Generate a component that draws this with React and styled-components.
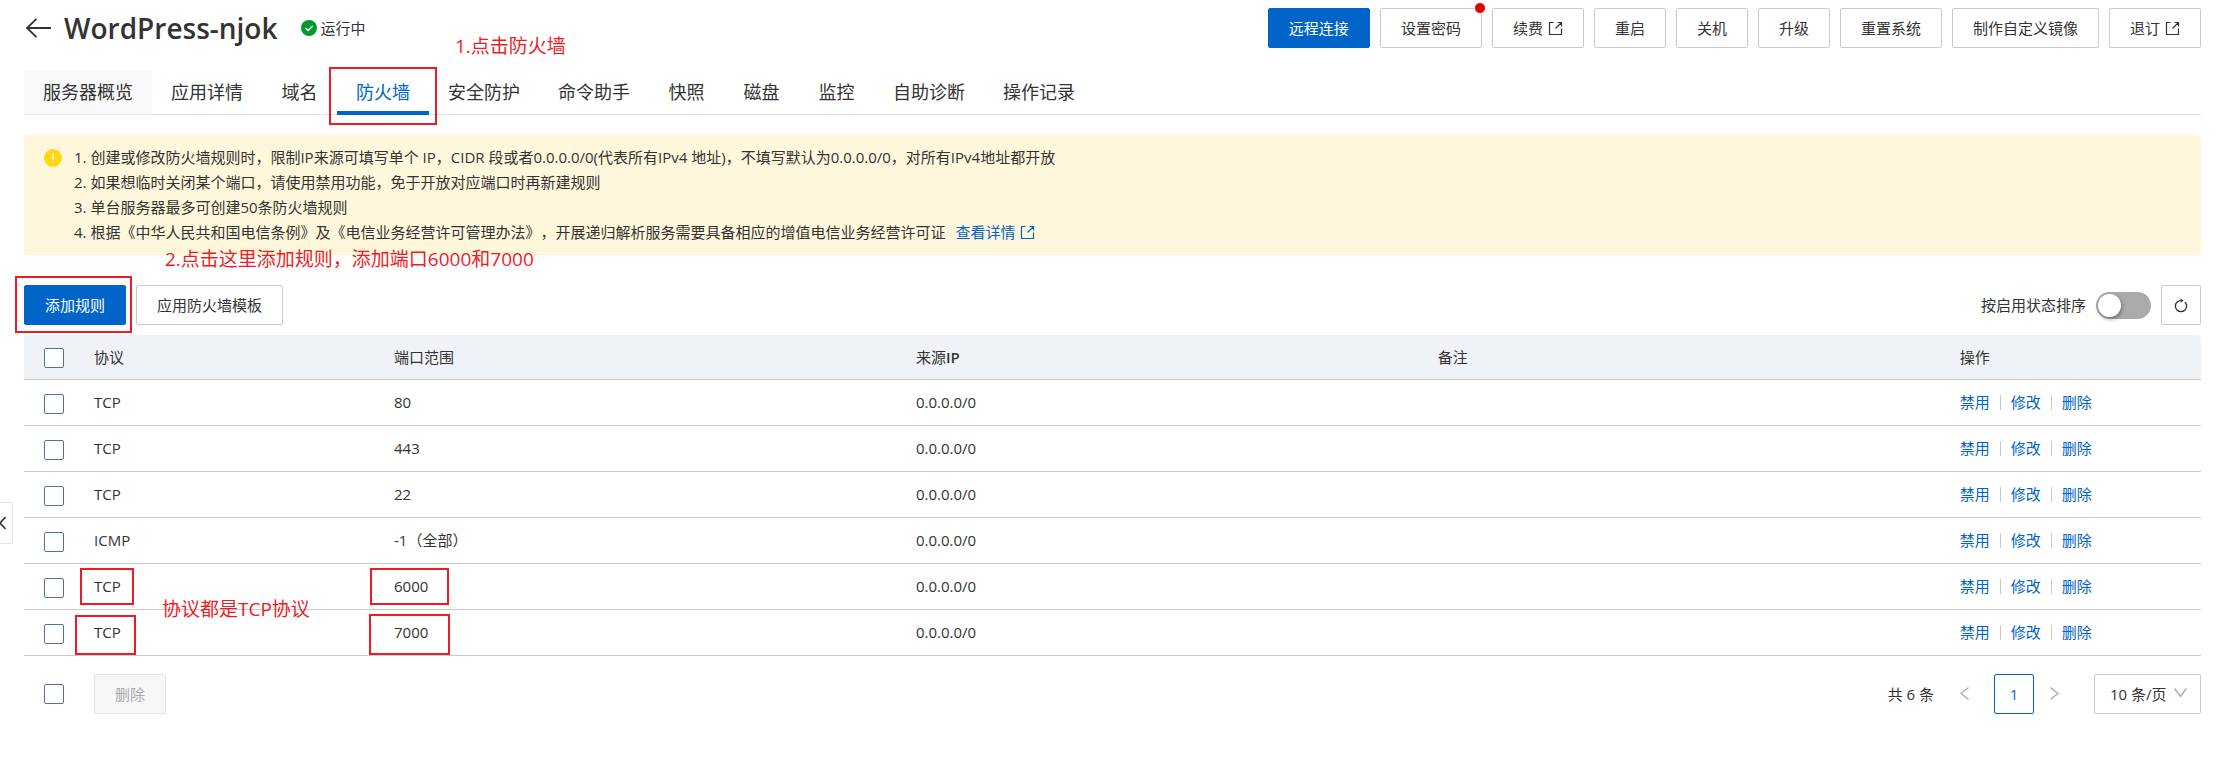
import React, { useState } from "react";
import styled, { createGlobalStyle, css } from "styled-components";

const blue = "#0064c8";
const text = "#333";
const line = "#c8cacc";
const red = "#ed1c24";

const GlobalStyle = createGlobalStyle`
  * {
    box-sizing: border-box;
  }
  body {
    margin: 0;
    background: #fff;
    color: ${text};
    font-family: "Open Sans", "Noto Sans CJK SC", sans-serif;
    font-size: 15px;
    line-height: 25px;
    text-spacing-trim: space-all;
  }
  button,
  input,
  select {
    margin: 0;
    font: inherit;
    color: inherit;
  }
`;

const Page = styled.main`
  padding: 8px 28px 44px 24px;
`;

const Header = styled.header`
  display: flex;
  align-items: center;
  height: 40px;
  margin-bottom: 22px;
`;

const BackButton = styled.button`
  display: flex;
  padding: 0;
  margin: 0 13px 0 1px;
  border: 0;
  background: none;
`;

const Title = styled.h1`
  margin: 0;
  font-size: 28px;
  font-weight: 600;
  line-height: 40px;
`;

const Status = styled.span`
  display: flex;
  align-items: center;
  gap: 4px;
  margin-left: 23px;
`;

const Actions = styled.div`
  display: flex;
  gap: 10px;
  margin-left: auto;
`;

const Button = styled.button`
  position: relative;
  display: flex;
  align-items: center;
  justify-content: center;
  gap: 5px;
  height: 40px;
  padding: 0 20px;
  border: 1px solid ${line};
  border-radius: 2px;
  background: #fff;
  white-space: nowrap;
  ${(p) =>
    p.$primary &&
    css`
      border-color: ${blue};
      background: ${blue};
      color: #fff;
    `}
  ${(p) =>
    p.$square &&
    css`
      width: 40px;
      padding: 0;
    `}
  &:disabled {
    border-color: #e3e4e6;
    background: #f7f7f7;
    color: #aaa;
  }
`;

const Dot = styled.span`
  position: absolute;
  top: -7px;
  right: -5px;
  width: 12px;
  height: 12px;
  border: 1px solid #fff;
  border-radius: 50%;
  background: #e00000;
`;

const Tabs = styled.nav`
  display: flex;
  border-bottom: 1px solid #e3e4e6;
`;

const Tab = styled.a`
  position: relative;
  min-width: 75px;
  height: 44px;
  padding: 0 19px;
  color: ${text};
  font-size: 18px;
  line-height: 44px;
  text-align: center;
  text-decoration: none;
  ${(p) =>
    p.$hover &&
    css`
      background: #f7f9fa;
    `}
  ${(p) =>
    p.$active &&
    css`
      color: ${blue};
      &::after {
        content: "";
        position: absolute;
        right: 0;
        bottom: -1px;
        left: 0;
        height: 4px;
        background: ${blue};
      }
    `}
`;

const Notice = styled.section`
  position: relative;
  display: flex;
  gap: 12px;
  margin-top: 20px;
  padding: 10px 20px;
  border-radius: 2px;
  background: #fff7db;
  svg {
    flex: none;
  }
`;

const NoticeIcon = styled.span`
  display: flex;
  align-items: center;
  height: 25px;
`;

const NoticeText = styled.div`
  p {
    margin: 0;
  }
`;

const Link = styled.a`
  display: inline-flex;
  align-items: center;
  gap: 5px;
  color: ${blue};
  text-decoration: none;
`;

const DetailLink = styled(Link)`
  margin-left: 10px;
`;

const Toolbar = styled.div`
  display: flex;
  align-items: center;
  gap: 10px;
  margin: 30px 0 10px;
`;

const SortLabel = styled.label`
  display: flex;
  align-items: center;
  gap: 10px;
  margin-left: auto;
`;

const Switch = styled.input`
  appearance: none;
  width: 55px;
  height: 27px;
  border-radius: 14px;
  background: #aaa;
  &::before {
    content: "";
    display: block;
    width: 23px;
    height: 23px;
    margin: 2px;
    border-radius: 50%;
    background: #fff;
    box-shadow: 1px 2px 4px rgba(0, 0, 0, 0.35);
  }
  &:checked {
    background: ${blue};
  }
  &:checked::before {
    margin-left: 30px;
  }
`;

const Check = styled.input`
  appearance: none;
  display: block;
  width: 20px;
  height: 20px;
  border: 1px solid #50749c;
  border-radius: 2px;
  background: #fff;
  &:checked {
    background: ${blue};
  }
`;

const Table = styled.table`
  width: 100%;
  table-layout: fixed;
  border-collapse: separate;
  border-spacing: 0;
  th,
  td {
    height: 46px;
    padding: 0 20px;
    border-bottom: 1px solid ${line};
    text-align: left;
    font-weight: 400;
  }
  th {
    height: 45px;
    background: #eff3f8;
  }
  th b {
    font-weight: 600;
  }
  th:first-child {
    border-top-left-radius: 4px;
  }
  th:last-child {
    border-top-right-radius: 4px;
  }
  th:first-child,
  td:first-child {
    padding: 2px 0 0 20px;
  }
`;

const Cell = styled.span`
  position: relative;
`;

const RowActions = styled.div`
  display: flex;
  align-items: center;
  gap: 10px;
`;

const Separator = styled.span`
  width: 1px;
  height: 15px;
  background: ${line};
`;

const Footer = styled.footer`
  display: flex;
  align-items: center;
  gap: 30px;
  padding: 18px 0 0 20px;
`;

const Pagination = styled.div`
  display: flex;
  align-items: center;
  gap: 10px;
  margin-left: auto;
`;

const PageArrow = styled.button`
  display: flex;
  align-items: center;
  justify-content: center;
  width: 40px;
  height: 40px;
  padding: 0 0 2px;
  border: 0;
  background: none;
`;

const Pages = styled.div`
  display: flex;
  margin-right: 10px;
`;

const CurrentPage = styled(Button)`
  width: 40px;
  padding: 0;
  border-color: ${blue};
  color: ${blue};
  font-weight: 500;
`;

const SizePicker = styled.div`
  position: relative;
  select {
    appearance: none;
    display: block;
    width: 107px;
    height: 40px;
    padding: 0 0 0 15px;
    border: 1px solid ${line};
    border-radius: 2px;
    background: #fff;
  }
  svg {
    position: absolute;
    top: 14px;
    right: 14px;
    pointer-events: none;
  }
`;

const Handle = styled.button`
  position: absolute;
  top: 502px;
  left: 0;
  display: flex;
  align-items: center;
  width: 13px;
  height: 42px;
  padding: 0;
  border: 1px solid #e3e4e6;
  border-left: 0;
  border-radius: 0 2px 2px 0;
  background: #fff;
`;

// red marks laid over the page
const Mark = styled.span`
  position: absolute;
  top: ${(p) => p.$top}px;
  left: ${(p) => p.$left}px;
  z-index: 1;
  width: ${(p) => p.$width}px;
  height: ${(p) => p.$height}px;
  border: 2px solid ${red};
  pointer-events: none;
`;

const Note = styled.span`
  position: absolute;
  top: ${(p) => p.$top}px;
  left: ${(p) => p.$left}px;
  z-index: 1;
  color: ${red};
  font-size: 19px;
  font-weight: 400;
  line-height: 26px;
  white-space: nowrap;
  pointer-events: none;
`;

const ExternalIcon = () => (
  <svg width="15" height="15" viewBox="0 0 15 15" fill="none" stroke="currentColor" aria-hidden="true">
    <path d="M5.500 1.500h-4v12h12v-6M9.500 1.500h4v4M13.500 1.500l-6 6" strokeWidth="1.200" />
  </svg>
);

const BackIcon = () => (
  <svg width="26" height="20" viewBox="0 0 26 20" fill="none" stroke={text} strokeWidth="1.800" aria-hidden="true">
    <path d="M11.500 .8L2 10l9.500 9.200M2 10h24" />
  </svg>
);

const RunningIcon = () => (
  <svg width="16" height="16" viewBox="0 0 16 16" aria-hidden="true">
    <circle cx="8" cy="8" r="8" fill="#00982f" />
    <path d="M4.500 8l2.600 2.500 4.600-4.600" fill="none" stroke="#fff" strokeWidth="1.300" />
  </svg>
);

const WarnIcon = () => (
  <svg width="18" height="18" viewBox="0 0 18 18" aria-hidden="true">
    <circle cx="9" cy="9" r="9" fill="#ffd712" />
    <path d="M9 4.500v6M9 12v1.800" stroke="#fff7db" strokeWidth="1.600" />
  </svg>
);

const RefreshIcon = () => (
  <svg width="14" height="15" viewBox="0 0 14 15" fill="none" stroke={text} strokeWidth="1.300" aria-hidden="true">
    <path d="M10.800 4a5.600 5.600 0 1 1-7.600 0C4.400 3 6 2.500 8 2.600" />
    <path d="M6.500 .4L9.600 2.600l-2.600 2z" fill={text} stroke="none" />
  </svg>
);

const Chevron = ({ d, width = 9, height = 13, color = "#aaa", stroke = 1.3 }) => (
  <svg
    width={width}
    height={height}
    viewBox={`0 0 ${width} ${height}`}
    fill="none"
    stroke={color}
    strokeWidth={stroke}
    aria-hidden="true"
  >
    <path d={d} />
  </svg>
);

const actions = [
  { label: "远程连接", primary: true },
  { label: "设置密码", dot: true },
  { label: "续费", external: true },
  { label: "重启" },
  { label: "关机" },
  { label: "升级" },
  { label: "重置系统" },
  { label: "制作自定义镜像" },
  { label: "退订", external: true },
];

const tabs = [
  "服务器概览",
  "应用详情",
  "域名",
  "防火墙",
  "安全防护",
  "命令助手",
  "快照",
  "磁盘",
  "监控",
  "自助诊断",
  "操作记录",
];

const rules = [
  { protocol: "TCP", port: "80" },
  { protocol: "TCP", port: "443" },
  { protocol: "TCP", port: "22" },
  { protocol: "ICMP", port: "-1（全部）" },
  {
    protocol: "TCP",
    port: "6000",
    protocolMark: { $top: -8, $left: -14, $width: 54, $height: 37 },
    portMark: { $top: -8, $left: -24, $width: 79, $height: 37 },
    note: "协议都是TCP协议",
  },
  {
    protocol: "TCP",
    port: "7000",
    protocolMark: { $top: -7, $left: -19, $width: 61, $height: 40 },
    portMark: { $top: -8, $left: -25, $width: 81, $height: 41 },
  },
];

const Rule = ({ rule }) => (
  <tr>
    <td>
      <Check type="checkbox" aria-label={`${rule.protocol} ${rule.port}`} />
    </td>
    <td>
      <Cell>
        {rule.protocol}
        {rule.protocolMark && <Mark {...rule.protocolMark} />}
        {rule.note && (
          <Note $top={20} $left={68}>
            {rule.note}
          </Note>
        )}
      </Cell>
    </td>
    <td>
      <Cell>
        {rule.port}
        {rule.portMark && <Mark {...rule.portMark} />}
      </Cell>
    </td>
    <td>0.0.0.0/0</td>
    <td />
    <td>
      <RowActions>
        <Link href="#disable">禁用</Link>
        <Separator />
        <Link href="#edit">修改</Link>
        <Separator />
        <Link href="#delete">删除</Link>
      </RowActions>
    </td>
  </tr>
);

const App = () => {
  const [sorted, setSorted] = useState(false);
  return (
    <>
      <GlobalStyle />
      <Page>
        <Header>
          <BackButton aria-label="返回">
            <BackIcon />
          </BackButton>
          <Title>WordPress-njok</Title>
          <Status>
            <RunningIcon />
            运行中
          </Status>
          <Actions>
            {actions.map((a) => (
              <Button key={a.label} $primary={a.primary}>
                {a.label}
                {a.external && <ExternalIcon />}
                {a.dot && <Dot />}
              </Button>
            ))}
          </Actions>
        </Header>
        <Tabs>
          {tabs.map((label, i) => (
            <Tab key={label} href={`#tab-${i}`} $hover={i === 0} $active={i === 3}>
              {label}
              {i === 3 && (
                <>
                  <Mark $top={-3} $left={-8} $width={108} $height={58} />
                  <Note $top={-37} $left={118}>
                    1.点击防火墙
                  </Note>
                </>
              )}
            </Tab>
          ))}
        </Tabs>
        <Notice>
          <NoticeIcon>
            <WarnIcon />
          </NoticeIcon>
          <NoticeText>
            <p>
              1. 创建或修改防火墙规则时，限制IP来源可填写单个 IP，CIDR
              段或者0.0.0.0/0(代表所有IPv4
              地址)，不填写默认为0.0.0.0/0，对所有IPv4地址都开放
            </p>
            <p>2. 如果想临时关闭某个端口，请使用禁用功能，免于开放对应端口时再新建规则</p>
            <p>3. 单台服务器最多可创建50条防火墙规则</p>
            <p>
              4.
              根据《中华人民共和国电信条例》及《电信业务经营许可管理办法》，开展递归解析服务需要具备相应的增值电信业务经营许可证
              <DetailLink href="#detail">
                查看详情
                <ExternalIcon />
              </DetailLink>
            </p>
          </NoticeText>
          <Note $top={111} $left={141}>
            2.点击这里添加规则，添加端口6000和7000
          </Note>
        </Notice>
        <Toolbar>
          <Button $primary>
            添加规则
            <Mark $top={-10} $left={-10} $width={117} $height={57} />
          </Button>
          <Button>应用防火墙模板</Button>
          <SortLabel>
            按启用状态排序
            <Switch
              type="checkbox"
              role="switch"
              checked={sorted}
              onChange={(e) => setSorted(e.target.checked)}
            />
          </SortLabel>
          <Button $square aria-label="刷新">
            <RefreshIcon />
          </Button>
        </Toolbar>
        <Table>
          <colgroup>
            <col width="50" />
            <col width="300" />
            <col />
            <col />
            <col />
            <col width="12%" />
          </colgroup>
          <thead>
            <tr>
              <th>
                <Check type="checkbox" aria-label="全选" />
              </th>
              <th>协议</th>
              <th>端口范围</th>
              <th>
                来源<b>IP</b>
              </th>
              <th>备注</th>
              <th>操作</th>
            </tr>
          </thead>
          <tbody>
            {rules.map((rule) => (
              <Rule key={rule.port} rule={rule} />
            ))}
          </tbody>
        </Table>
        <Footer>
          <Check type="checkbox" aria-label="全选" />
          <Button disabled>删除</Button>
          <Pagination>
            <span>共 6 条</span>
            <PageArrow aria-label="上一页">
              <Chevron d="M8.500 .5L1 6.500l7.500 6" />
            </PageArrow>
            <Pages>
              <CurrentPage>1</CurrentPage>
              <PageArrow aria-label="下一页">
                <Chevron d="M.5 .5L8 6.500l-7.500 6" />
              </PageArrow>
            </Pages>
            <SizePicker>
              <select aria-label="每页条数" defaultValue="10">
                <option value="10">10 条/页</option>
                <option value="20">20 条/页</option>
              </select>
              <Chevron width={13} height={10} d="M.5 .5l6 8 6-8" />
            </SizePicker>
          </Pagination>
        </Footer>
      </Page>
      <Handle aria-label="展开">
        <Chevron width={6} height={14} color={text} stroke={1.6} d="M5.500 1L0 7l5.500 6" />
      </Handle>
    </>
  );
};

export default App;
